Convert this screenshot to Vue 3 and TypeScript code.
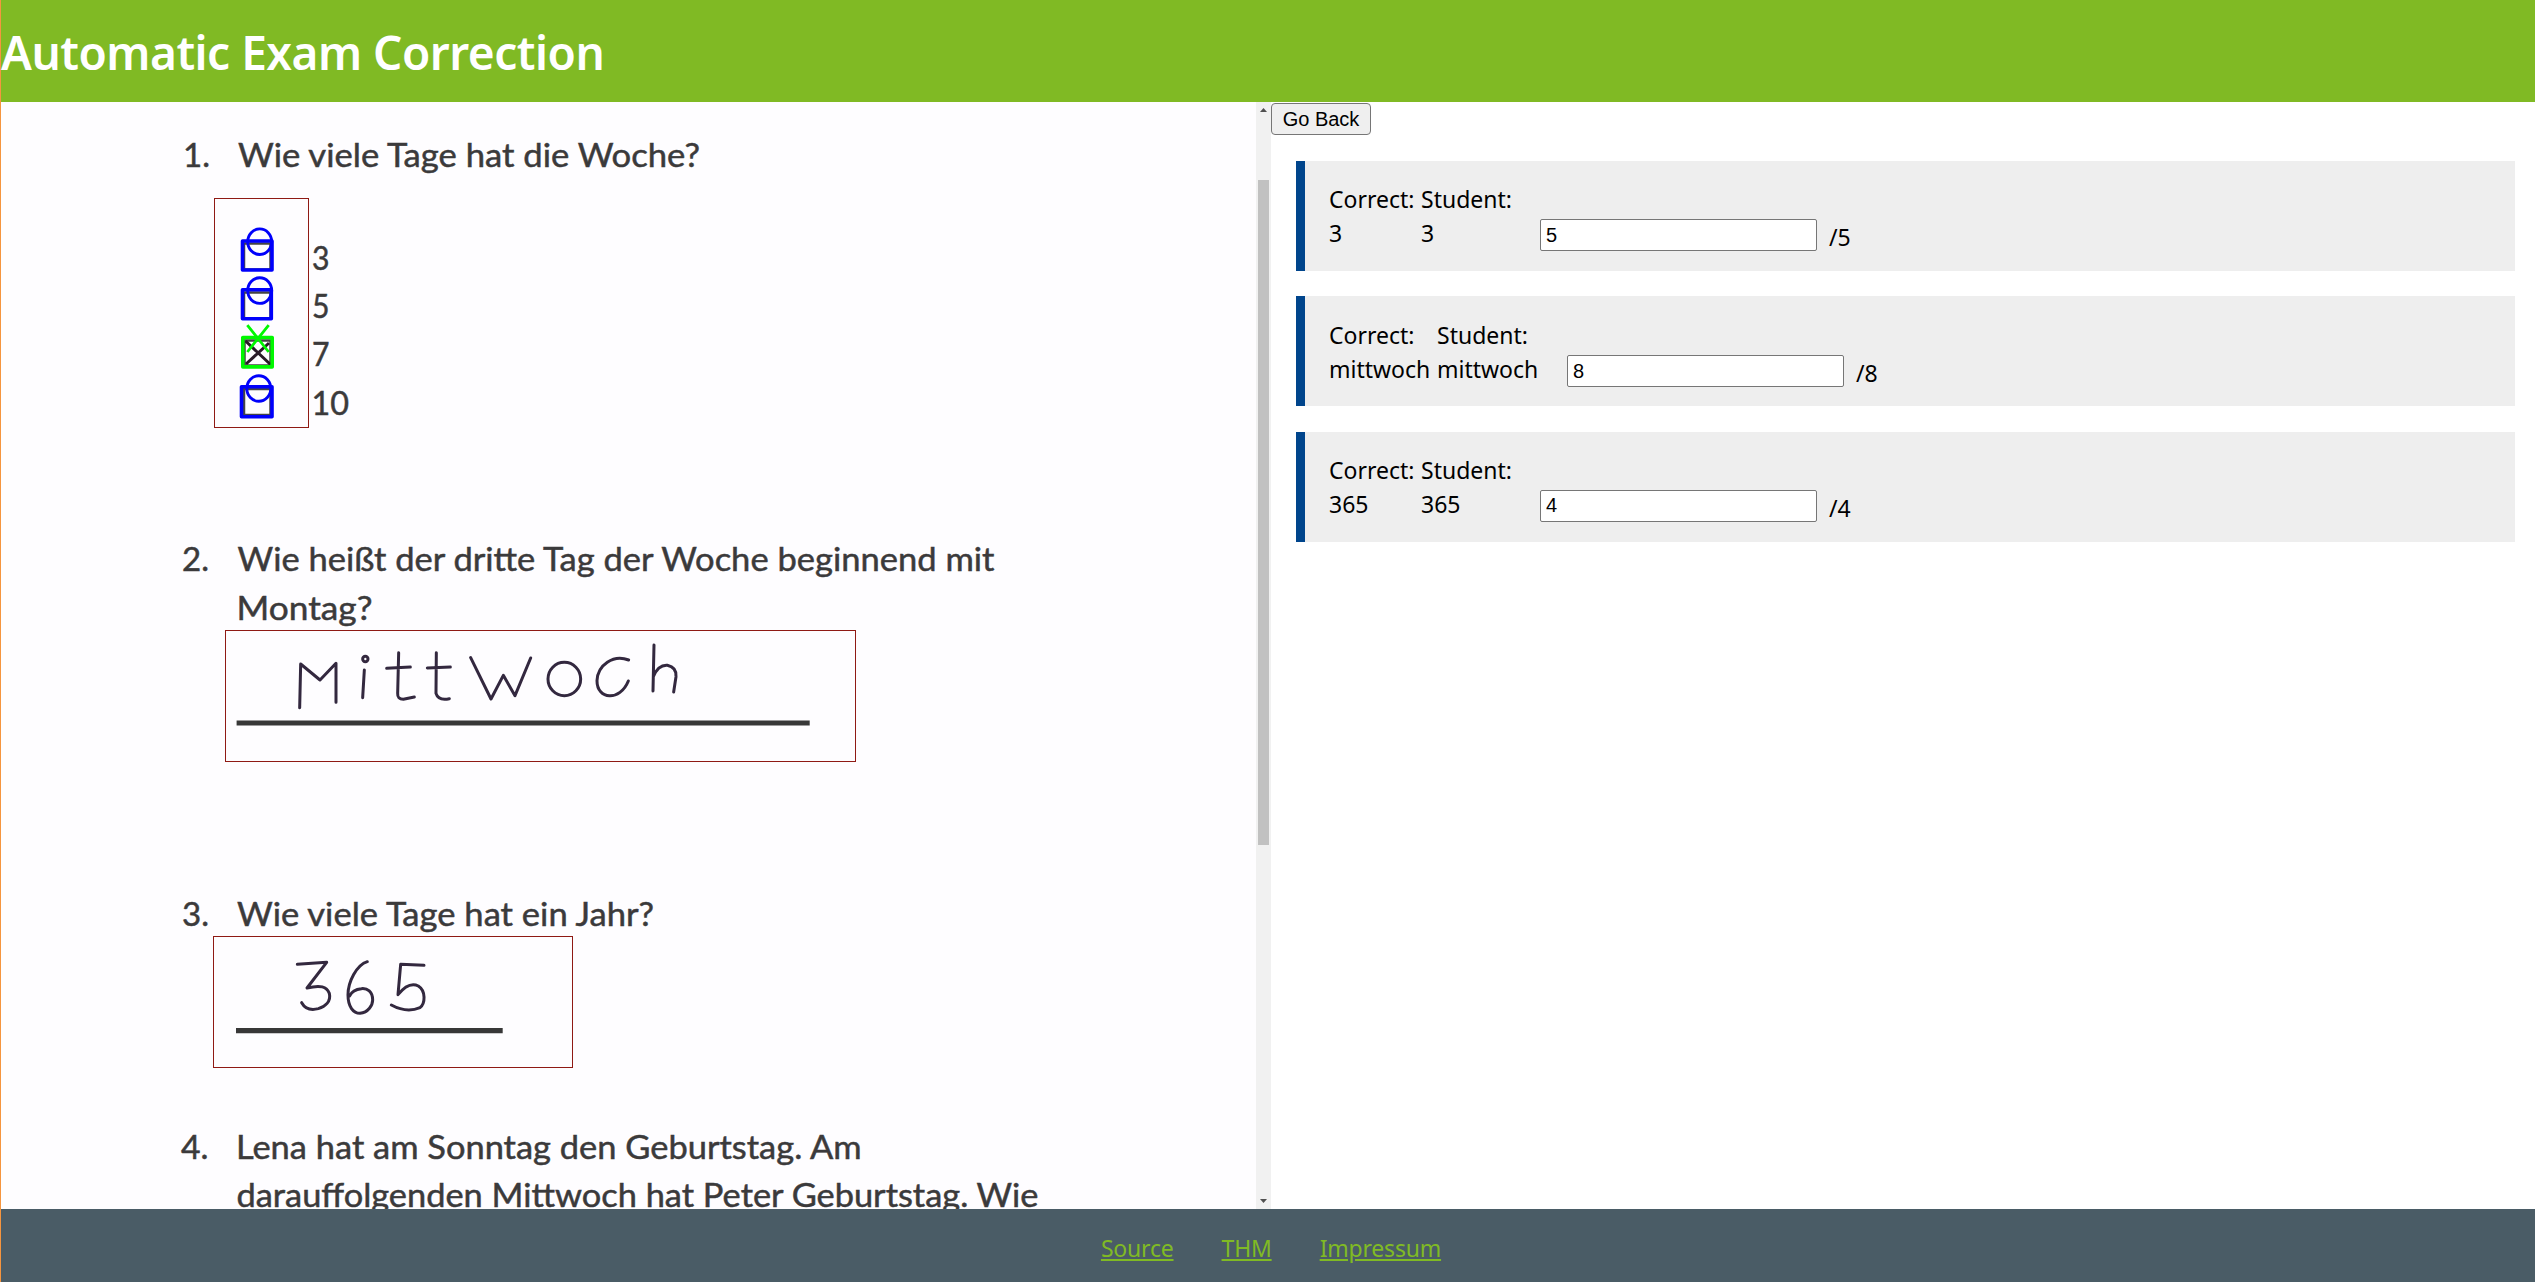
<script setup lang="ts">
interface Result {
  correct: string
  student: string
  points: string
  max: number
  wide?: boolean
}

interface PrintedText {
  x: number
  y: number
  width: number
  text: string
}

const results: Result[] = [
  { correct: '3', student: '3', points: '5', max: 5 },
  { correct: 'mittwoch', student: 'mittwoch', points: '8', max: 8, wide: true },
  { correct: '365', student: '365', points: '4', max: 4 },
]

const links = ['Source', 'THM', 'Impressum']

// Printed lines of the exam sheet, in sheet coordinates
const printed: PrintedText[] = [
  { x: 183, y: 64.5, width: 27, text: '1.' },
  { x: 238, y: 64.5, width: 462, text: 'Wie viele Tage hat die Woche?' },
  { x: 312, y: 167.5, width: 17.5, text: '3' },
  { x: 312, y: 215.5, width: 17.5, text: '5' },
  { x: 312, y: 263.5, width: 17.5, text: '7' },
  { x: 311.5, y: 313, width: 37.5, text: '10' },
  { x: 182, y: 469, width: 27, text: '2.' },
  { x: 237.5, y: 469, width: 757, text: 'Wie heißt der dritte Tag der Woche beginnend mit' },
  { x: 236.5, y: 517.8, width: 136, text: 'Montag?' },
  { x: 182, y: 824, width: 27, text: '3.' },
  { x: 237, y: 824, width: 417, text: 'Wie viele Tage hat ein Jahr?' },
  { x: 181, y: 1056.7, width: 27.5, text: '4.' },
  { x: 236, y: 1056.7, width: 625.5, text: 'Lena hat am Sonntag den Geburtstag. Am' },
  { x: 236.5, y: 1105, width: 802, text: 'darauffolgenden Mittwoch hat Peter Geburtstag. Wie' },
]
</script>

<template>
  <div class="app">
    <header class="header">
      <h1>Automatic Exam Correction</h1>
    </header>
    <main class="main">
      <section class="scan">
        <svg class="sheet" viewBox="1 0 1255 1107" width="1255" height="1107">
          <g class="printed">
            <text
              v-for="line in printed"
              :key="line.y + line.text"
              :x="line.x"
              :y="line.y"
              :textLength="line.width"
              lengthAdjust="spacingAndGlyphs"
            >{{ line.text }}</text>
          </g>

          <!-- printed checkboxes -->
          <g class="printed-box">
            <rect x="244" y="141.5" width="26.5" height="26" />
            <rect x="244" y="190.5" width="26.5" height="26" />
            <rect x="244.5" y="238.5" width="26" height="25" />
            <rect x="244" y="287" width="26.5" height="26" />
          </g>
          <path class="cross" d="M245.5 239L270.5 262.5M269 241L246 262" />

          <!-- detected checkboxes -->
          <g class="unchecked">
            <rect x="242.5" y="139" width="29.5" height="29" />
            <ellipse cx="259.7" cy="139.7" rx="12" ry="12.8" />
            <rect x="242.5" y="187.7" width="28.8" height="29" />
            <ellipse cx="259.7" cy="188.6" rx="12" ry="12.8" />
            <rect x="241.5" y="284.7" width="30.5" height="30" />
            <ellipse cx="258.8" cy="286.5" rx="12" ry="12.8" />
          </g>
          <g class="checked">
            <rect x="242.8" y="235.5" width="29.4" height="29.4" />
            <path d="M247.3 223.2L268.7 250M268.7 223.2L247.3 250" />
          </g>

          <!-- ruled answer lines -->
          <path class="rule" d="M236.6 621H809.7" />
          <path class="rule" d="M236 928.7H502.7" />

          <!-- pen strokes -->
          <g class="ink" transform="translate(170 428) scale(.33333)">
            <path d="M389 533L392 402L450 450L498 400L498 517" />
            <path d="M583 420L578 503" />
            <circle cx="586" cy="387" r="8" />
            <path d="M686 368L683 490Q682 508 700 508L733 501M650 415L721 411" />
            <path d="M799 368L798 490Q805 513 838 506M772 414L841 411" />
            <path d="M902 383L963 507L1000 436L1035 497L1082 384" />
            <ellipse cx="1183" cy="447" rx="49" ry="50" />
            <path d="M1376 390C1330 372 1283 405 1281 452C1281 510 1350 515 1375 453" />
            <path d="M1452 345L1449 483M1450 440Q1465 404 1492 406Q1520 412 1518 440L1511 486" />
          </g>
          <g class="ink" transform="translate(170 788) scale(.33333)">
            <path d="M382 223L470 217L411 294C452 284 470 290 478 310C484 335 465 350 445 356Q410 365 395 338" />
            <path d="M592 215C560 225 534 275 534 315C534 350 550 370 570 370C595 368 608 345 608 330C608 305 592 294 574 296Q548 298 539 318" />
            <path d="M762 226L692 223L684 314C705 288 725 278 745 288C768 303 766 340 750 353Q710 370 664 345" />
          </g>

          <!-- answer regions -->
          <g class="region">
            <rect x="214.5" y="96.5" width="94" height="229" />
            <rect x="225.5" y="528.5" width="630" height="131" />
            <rect x="213.5" y="834.5" width="359" height="131" />
          </g>
        </svg>
        <div class="scrollbar">
          <svg class="arrow" viewBox="0 0 15 15"><path d="M4 10L7.5 6L11 10Z" /></svg>
          <div class="track"><div class="thumb"></div></div>
          <svg class="arrow" viewBox="0 0 15 15"><path d="M4 5L7.5 9L11 5Z" /></svg>
        </div>
      </section>

      <section class="results">
        <button class="back" type="button">Go Back</button>
        <div class="cards">
          <article v-for="(r, i) in results" :key="i" class="card" :class="{ wide: r.wide }">
            <dl class="answer">
              <dt>Correct:</dt>
              <dd>{{ r.correct }}</dd>
            </dl>
            <dl class="answer student">
              <dt>Student:</dt>
              <dd>{{ r.student }}</dd>
            </dl>
            <input v-model="r.points" class="points" type="text" />
            <span class="max">/{{ r.max }}</span>
          </article>
        </div>
      </section>
    </main>
    <footer class="footer">
      <a v-for="link in links" :key="link" href="#">{{ link }}</a>
    </footer>
  </div>
</template>

<style>
body {
  margin: 0;
  overflow: hidden;
}
</style>

<style scoped>
.app {
  box-sizing: border-box;
  display: flex;
  flex-direction: column;
  width: 100%;
  height: 100vh;
  border-left: 1px solid #f5953f;
  background: #fff;
  color: #000;
  font-family: "Noto Sans", "Open Sans", sans-serif;
  font-size: 23px;
}
.header {
  display: flex;
  align-items: center;
  flex: none;
  height: 102px;
  background: #80ba24;
}
h1 {
  margin: 1px 0 0;
  color: #fff;
  font-size: 46px;
  line-height: 1;
  font-weight: 600;
  letter-spacing: -0.5px;
  white-space: nowrap;
}
.main {
  display: flex;
  flex: none;
  height: 1107px;
}
.scan {
  display: flex;
  flex: none;
  width: 1270px;
  background: #fefdff;
}
.sheet {
  flex: none;
  display: block;
}
.printed text {
  font-family: Lato, sans-serif;
  font-size: 33px;
  fill: #3b3a3b;
  stroke: #3b3a3b;
  stroke-width: 0.5px;
}
.printed-box rect {
  fill: none;
  stroke: #444;
  stroke-width: 2.5;
}
.cross {
  fill: none;
  stroke: #2a1a28;
  stroke-width: 3;
}
.unchecked > * {
  fill: none;
  stroke: #0000fb;
  stroke-width: 3.6;
  stroke-linejoin: round;
}
.unchecked ellipse {
  stroke-width: 2.9;
}
.checked > * {
  fill: none;
  stroke: #00f800;
  stroke-width: 3.6;
  stroke-linejoin: round;
}
.checked path {
  stroke-width: 2.8;
}
.rule {
  stroke: #383838;
  stroke-width: 5.2;
}
.ink {
  fill: none;
  stroke: #33283f;
  stroke-width: 9;
  stroke-linecap: round;
  stroke-linejoin: round;
}
.region rect {
  fill: none;
  stroke: #8f1a14;
  stroke-width: 1;
}
.scrollbar {
  display: flex;
  flex-direction: column;
  width: 15px;
  background: #f1f1f1;
}
.arrow {
  flex: none;
  width: 15px;
  height: 15px;
  fill: #505050;
}
.track {
  flex: 1;
  padding: 63px 2px 0;
}
.thumb {
  height: 665px;
  background: #c1c1c1;
}
.results {
  flex: 1;
  padding-top: 1px;
}
.back {
  display: block;
  box-sizing: border-box;
  width: 100px;
  height: 32px;
  padding: 0;
  border: 1px solid #767676;
  border-radius: 4px;
  background: #efefef;
  color: #000;
  font: 20px "Liberation Sans", Arial, sans-serif;
}
.cards {
  display: flex;
  flex-direction: column;
  gap: 25.4px;
  padding: 26px 20px 0 25px;
}
.card {
  box-sizing: border-box;
  display: flex;
  height: 110px;
  padding: 21px 0 0 24px;
  border-left: 9px solid #00458c;
  background: #eee;
}
.card.wide {
  padding-top: 22px;
}
.answer {
  width: 92px;
  margin: 0;
  line-height: 34px;
  white-space: nowrap;
}
.answer.student {
  width: 119px;
}
.wide .answer {
  width: 108px;
}
.wide .answer.student {
  width: 130px;
}
dd {
  margin: 0;
}
.points {
  box-sizing: border-box;
  width: 277px;
  height: 32px;
  margin: 37px 0 0;
  padding: 0 5px;
  border: 1px solid #767676;
  border-radius: 2px;
  background: #fff;
  color: #000;
  font: 20px "Liberation Sans", Arial, sans-serif;
}
.max {
  margin: 38px 0 0 12px;
  line-height: 34px;
}
.footer {
  display: flex;
  flex: 1;
  align-items: center;
  justify-content: center;
  gap: 48px;
  padding: 4px 0 0 6px;
  background: #4a5c66;
}
.footer a {
  color: #80ba24;
  letter-spacing: -0.2px;
  line-height: 34px;
  text-decoration: underline;
}
</style>
